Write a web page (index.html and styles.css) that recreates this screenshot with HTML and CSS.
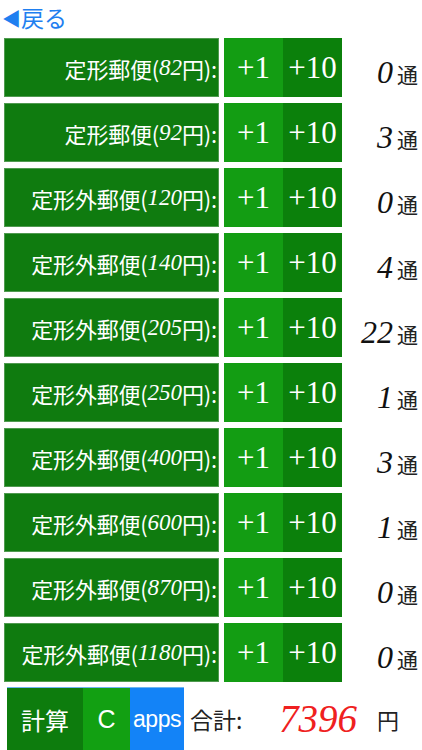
FILE: index.html
```html
<!DOCTYPE html>
<html lang="ja">
<head>
<meta charset="utf-8">
<link rel="stylesheet" href="styles.css">
</head>
<body>
<div class="back"><span class="tri">&#9664;</span>戻る</div>
<div class="list">
  <div class="row"><div class="label">定形郵便(<i>82</i>円):</div><div class="b1">+1</div><div class="b10">+10</div><div class="count"><span class="num">0</span><span class="unit">通</span></div></div>
  <div class="row"><div class="label">定形郵便(<i>92</i>円):</div><div class="b1">+1</div><div class="b10">+10</div><div class="count"><span class="num">3</span><span class="unit">通</span></div></div>
  <div class="row"><div class="label">定形外郵便(<i>120</i>円):</div><div class="b1">+1</div><div class="b10">+10</div><div class="count"><span class="num">0</span><span class="unit">通</span></div></div>
  <div class="row"><div class="label">定形外郵便(<i>140</i>円):</div><div class="b1">+1</div><div class="b10">+10</div><div class="count"><span class="num">4</span><span class="unit">通</span></div></div>
  <div class="row"><div class="label">定形外郵便(<i>205</i>円):</div><div class="b1">+1</div><div class="b10">+10</div><div class="count"><span class="num">22</span><span class="unit">通</span></div></div>
  <div class="row"><div class="label">定形外郵便(<i>250</i>円):</div><div class="b1">+1</div><div class="b10">+10</div><div class="count"><span class="num">1</span><span class="unit">通</span></div></div>
  <div class="row"><div class="label">定形外郵便(<i>400</i>円):</div><div class="b1">+1</div><div class="b10">+10</div><div class="count"><span class="num">3</span><span class="unit">通</span></div></div>
  <div class="row"><div class="label">定形外郵便(<i>600</i>円):</div><div class="b1">+1</div><div class="b10">+10</div><div class="count"><span class="num">1</span><span class="unit">通</span></div></div>
  <div class="row"><div class="label">定形外郵便(<i>870</i>円):</div><div class="b1">+1</div><div class="b10">+10</div><div class="count"><span class="num">0</span><span class="unit">通</span></div></div>
  <div class="row"><div class="label">定形外郵便(<i>1180</i>円):</div><div class="b1">+1</div><div class="b10">+10</div><div class="count"><span class="num">0</span><span class="unit">通</span></div></div>
</div>
<div class="bottom">
  <div class="calc">計算</div>
  <div class="clear">C</div>
  <div class="apps">apps</div>
  <div class="total-label">合計:</div>
  <div class="total">7396</div>
  <div class="yen">円</div>
</div>
</body>
</html>
```
FILE: styles.css
```css
html, body {
  margin: 0;
  padding: 0;
  background: #ffffff;
  width: 422px;
  height: 750px;
  overflow: hidden;
  font-family: "Noto Sans CJK JP", "Noto Sans", sans-serif;
}
.back {
  height: 38px;
  padding-left: 2px;
  display: flex;
  align-items: center;
  color: #1f7ff0;
  font-size: 23px;
  line-height: 1;
  box-sizing: border-box;
  padding-bottom: 3px;
}
.tri {
  font-size: 19px;
  margin-right: 0;
}
.list {
  display: flex;
  flex-direction: column;
  gap: 6px;
  padding-left: 4px;
}
.row {
  display: flex;
  height: 59px;
}
.label {
  width: 212px;
  background: #0f7b0f;
  border: 1px solid #4f9a4f;
  color: #ffffff;
  font-size: 22px;
  display: flex;
  align-items: center;
  justify-content: flex-end;
  padding-right: 1px;
  letter-spacing: -0.2px;
  white-space: nowrap;
}
.label i {
  font-family: "Liberation Serif", serif;
  font-style: italic;
  font-size: 23px;
  letter-spacing: 0;
}
.b1, .b10 {
  width: 59px;
  display: flex;
  align-items: center;
  justify-content: center;
  color: #ffffff;
  font-family: "Liberation Serif", "Times New Roman", serif;
  font-size: 31px;
}
.b1 {
  margin-left: 5px;
  background: #139d13;
}
.b10 {
  background: #0b800b;
}
.count {
  flex: 1;
  display: flex;
  align-items: baseline;
  justify-content: flex-end;
  padding-top: 18px;
  padding-right: 4px;
  box-sizing: border-box;
}
.num {
  font-family: "Liberation Serif", serif;
  font-style: italic;
  font-size: 32px;
  color: #111111;
  line-height: 1;
}
.unit {
  font-size: 21px;
  color: #222222;
  margin-left: 4px;
  line-height: 1;
}
.bottom {
  display: flex;
  margin-top: 5px;
  height: 63px;
  margin-left: 7px;
  align-items: stretch;
}
.calc, .clear, .apps {
  display: flex;
  align-items: center;
  justify-content: center;
  color: #ffffff;
}
.calc {
  width: 76px;
  background: #0d7c0d;
  font-size: 24px;
  border-top: 1px solid #6fb5f0;
}
.clear {
  width: 47px;
  background: #12a012;
  font-family: "Liberation Sans", sans-serif;
  font-size: 25px;
  border-top: 1px solid #6fb5f0;
}
.apps {
  width: 54px;
  background: #1383f7;
  font-family: "Liberation Sans", sans-serif;
  font-size: 23px;
  letter-spacing: -0.5px;
  border-top: 1px solid #6fb5f0;
}
.total-label {
  display: flex;
  align-items: center;
  margin-left: 6px;
  font-size: 23px;
  color: #222222;
  width: 89px;
}
.total {
  display: flex;
  align-items: center;
  font-family: "Liberation Serif", serif;
  font-style: italic;
  font-size: 39px;
  color: #ef2020;
  width: 98px;
}
.yen {
  display: flex;
  align-items: center;
  font-size: 22px;
  color: #222222;
}
```
